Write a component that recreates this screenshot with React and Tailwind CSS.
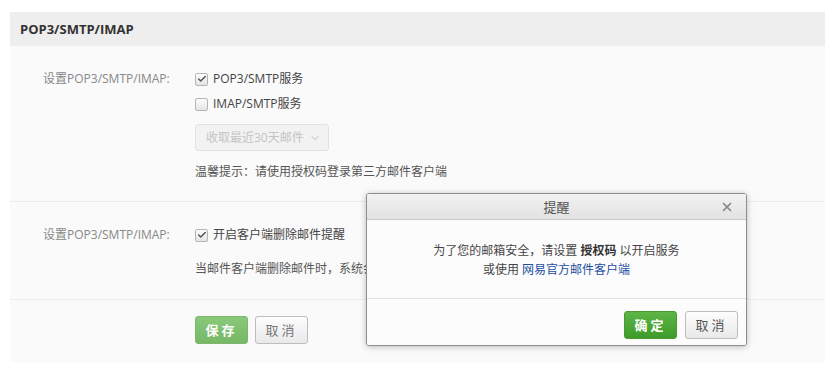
import { ChevronDown, X, Check } from "lucide-react";

function Box({ checked }) {
  return (
    <span className="inline-flex h-[13px] w-[13px] items-center justify-center rounded-[2px] border border-[#b5b5b5] bg-gradient-to-b from-[#fdfdfd] to-[#e4e4e4]">
      {checked && <Check size={10} strokeWidth={3.5} className="text-[#555]" />}
    </span>
  );
}

function Btn({ green, children, className = "" }) {
  return (
    <button
      className={`h-[28px] w-[53px] rounded-[3px] border text-[13px] tracking-[3px] ${
        green
          ? "border-[#4a9a32] bg-gradient-to-b from-[#5cb545] to-[#3e9b2a] font-bold text-white"
          : "border-[#bdbdbd] bg-gradient-to-b from-[#fdfdfd] to-[#e9e9e9] text-[#555]"
      } ${className}`}
    >
      {children}
    </button>
  );
}

export default function App() {
  return (
    <div
      className="relative h-[380px] w-[825px] overflow-hidden bg-white pt-[12px] pl-[10px] text-[12px] leading-[18px] text-[#444]"
      style={{ fontFamily: '"Open Sans", "Noto Sans CJK SC", sans-serif' }}
    >
      <div className="bg-[#fafafa]">
        <div className="flex h-[34px] items-center bg-[#eeeeee] px-[10px] text-[13px] font-bold text-[#333]">
          POP3/SMTP/IMAP
        </div>

        {/* row 1 */}
        <div className="flex h-[156px] border-b border-[#ececec] pt-[23px]">
          <div className="w-[185px] pl-[33px] leading-[20px] text-[#888]">设置POP3/SMTP/IMAP:</div>
          <div className="flex flex-col">
            <label className="flex h-[20px] items-center gap-[5px]">
              <Box checked /> POP3/SMTP服务
            </label>
            <label className="mt-[5px] flex h-[20px] items-center gap-[5px]">
              <Box /> IMAP/SMTP服务
            </label>
            <div className="mt-[10px] flex h-[27px] w-[134px] items-center gap-[5px] whitespace-nowrap rounded-[3px] border border-[#e2e2e2] bg-[#f2f2f2] pl-[10px] text-[#c4c4c4]">
              收取最近30天邮件 <ChevronDown size={12} strokeWidth={1.5} className="text-[#aaa]" />
            </div>
            <div className="mt-[12px] text-[#555]">温馨提示：请使用授权码登录第三方邮件客户端</div>
          </div>
        </div>

        {/* row 2 */}
        <div className="flex h-[98px] border-b border-[#ececec] pt-[23px]">
          <div className="w-[185px] pl-[33px] leading-[20px] text-[#888]">设置POP3/SMTP/IMAP:</div>
          <div className="flex flex-col">
            <label className="flex h-[20px] items-center gap-[5px]">
              <Box checked /> 开启客户端删除邮件提醒
            </label>
            <div className="mt-[15px] text-[#555]">当邮件客户端删除邮件时，系统会给予提醒</div>
          </div>
        </div>

        {/* row 3 */}
        <div className="flex h-[62px] gap-[7px] pl-[185px] pt-[16px]">
          <Btn green className="opacity-70">保存</Btn>
          <Btn className="text-[#777]">取消</Btn>
        </div>
      </div>

      {/* dialog */}
      <div className="absolute left-[366px] top-[193px] w-[381px] overflow-hidden rounded-[3px] border border-[#8e8e8e] bg-white shadow-[0_1px_6px_rgba(0,0,0,0.25)]">
        <div className="relative flex h-[26px] items-center justify-center border-b border-[#c8c8c8] bg-gradient-to-b from-[#f2f2f2] to-[#e2e2e2] text-[13px] text-[#555]">
          提醒
          <X size={14} strokeWidth={3} className="absolute right-[12px] text-[#888]" />
        </div>
        <div className="flex h-[79px] flex-col items-center justify-center border-b border-[#e2e2e2] bg-[#fcfcfc] pt-[2px] leading-[19px] text-[#444]">
          <div>
            为了您的邮箱安全，请设置 <span className="font-bold text-[#333]">授权码</span> 以开启服务
          </div>
          <div>
            或使用 <span className="text-[#1c4fa0]">网易官方邮件客户端</span>
          </div>
        </div>
        <div className="flex h-[46px] justify-end gap-[8px] bg-[#fcfcfc] pr-[8px] pt-[12px]">
          <Btn green>确定</Btn>
          <Btn>取消</Btn>
        </div>
      </div>
    </div>
  );
}
